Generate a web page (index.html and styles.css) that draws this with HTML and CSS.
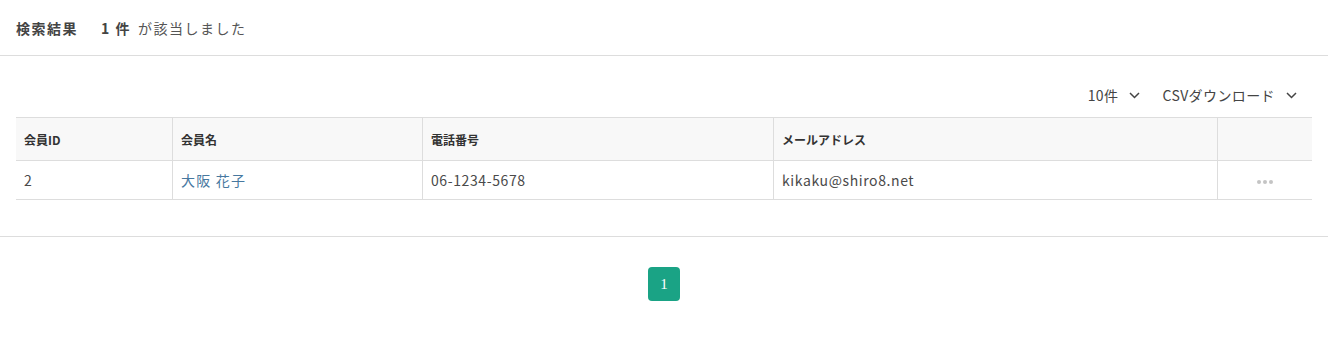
FILE: index.html
```html
<!DOCTYPE html>
<html lang="ja">
<head>
<meta charset="UTF-8">
<meta name="viewport" content="width=device-width, initial-scale=1.0">
<title>会員検索</title>
<link rel="stylesheet" href="styles.css">
</head>
<body>
<div class="result-head">
  <span class="label">検索結果</span>
  <span class="count">1 件</span>
  <span class="note">が該当しました</span>
</div>
<div class="result-body">
  <div class="toolbar">
    <span class="drop">10件 <svg width="11" height="7" viewBox="0 0 11 7"><path d="M1 1l4.5 4.5 4.5-4.5" fill="none" stroke="#444" stroke-width="1.5"/></svg></span>
    <span class="drop">CSVダウンロード <svg width="11" height="7" viewBox="0 0 11 7"><path d="M1 1l4.5 4.5 4.5-4.5" fill="none" stroke="#444" stroke-width="1.5"/></svg></span>
  </div>
  <table class="members">
    <thead>
      <tr>
        <th class="c-id">会員ID</th>
        <th class="c-name">会員名</th>
        <th class="c-tel">電話番号</th>
        <th class="c-mail">メールアドレス</th>
        <th class="c-act"></th>
      </tr>
    </thead>
    <tbody>
      <tr>
        <td>2</td>
        <td><a href="#">大阪 花子</a></td>
        <td>06-1234-5678</td>
        <td>kikaku@shiro8.net</td>
        <td class="act"><svg class="dots" width="16" height="4" viewBox="0 0 16 4"><circle cx="2" cy="2" r="2"/><circle cx="8" cy="2" r="2"/><circle cx="14" cy="2" r="2"/></svg></td>
      </tr>
    </tbody>
  </table>
</div>
<div class="pager">
  <span class="page current">1</span>
</div>
</body>
</html>
```

FILE: styles.css
```css
body {
  margin: 0;
  font-family: "Noto Sans CJK JP", "Noto Sans", sans-serif;
  color: #333;
  background: #fff;
}
.result-head {
  height: 55px;
  display: flex;
  align-items: center;
  padding: 0 16px;
  border-bottom: 1px solid #ddd;
  font-size: 14px;
  letter-spacing: 1.5px;
}
.result-head .label {
  font-weight: bold;
  color: #444;
  margin-right: 23px;
}
.result-head .count {
  font-weight: bold;
  color: #444;
  margin-right: 7px;
}
.result-head .note {
  color: #555;
}
.result-body {
  padding: 26px 16px 36px;
  border-bottom: 1px solid #ddd;
}
.toolbar {
  display: flex;
  justify-content: flex-end;
  gap: 22px;
  padding-right: 15px;
  height: 26px;
  align-items: center;
  margin-bottom: 9px;
  font-size: 14px;
  letter-spacing: 0.4px;
  color: #444;
}
.drop {
  display: flex;
  align-items: center;
  gap: 11px;
}
.members {
  width: 100%;
  border-collapse: collapse;
  font-size: 14px;
}
.members th,
.members td {
  border: 1px solid #ddd;
  text-align: left;
  padding: 0 8px;
}
.members tr > :first-child { border-left: none; }
.members tr > :last-child { border-right: none; }
.members th {
  background: #f8f8f8;
  height: 42px;
  font-size: 12px;
  font-weight: bold;
  color: #333;
}
.members td {
  height: 38px;
  color: #4a4a4a;
  letter-spacing: 0.6px;
}
.c-id { width: 140px; }
.c-name { width: 233px; }
.c-tel { width: 334px; }
.c-mail { width: 427px; }
.members a {
  color: #47789f;
  text-decoration: none;
  letter-spacing: 1.2px;
}
.members td.act {
  text-align: center;
}
.dots {
  fill: #c4c4c4;
  vertical-align: middle;
}
.pager {
  display: flex;
  justify-content: center;
  padding-top: 30px;
}
.page {
  width: 32px;
  height: 34px;
  display: flex;
  align-items: center;
  justify-content: center;
  border-radius: 4px;
  font-family: "Liberation Serif", serif;
  font-size: 15px;
}
.page.current {
  background: #1aa385;
  color: #fff;
}
```
